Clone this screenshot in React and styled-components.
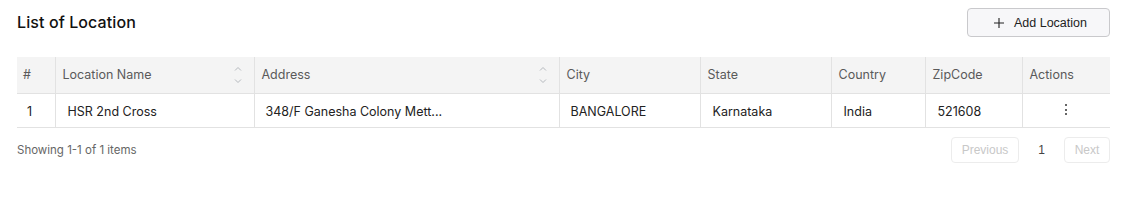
import React from 'react';
import styled, { createGlobalStyle } from 'styled-components';

const GlobalStyle = createGlobalStyle`
  body {
    margin: 0;
    background: #fff;
    font-family: "Inter", "Noto Sans", sans-serif;
    color: #222;
  }
`;

const Page = styled.div`
  padding: 8px 21px 0 17px;
`;

const TopBar = styled.div`
  display: flex;
  justify-content: space-between;
  align-items: center;
  height: 28px;
`;

const Title = styled.h1`
  margin: 0;
  font-size: 16px;
  font-weight: 500;
  color: #111;
  letter-spacing: 0.1px;
`;

const AddButton = styled.button`
  display: flex;
  align-items: center;
  justify-content: center;
  gap: 10px;
  width: 143px;
  height: 29px;
  margin-top: 1px;
  border: 1px solid #c9c9cc;
  border-radius: 4px;
  background: #f7f7f9;
  font-family: "Liberation Sans", Arial, sans-serif;
  font-size: 12.5px;
  color: #222;
  padding: 0 0 0 4px;
`;

const Plus = styled.svg`
  width: 10px;
  height: 10px;
`;

const Table = styled.table`
  margin-top: 21px;
  width: 100%;
  border-collapse: collapse;
  table-layout: fixed;
  font-size: 12.5px;
`;

const HeadCell = styled.th`
  position: relative;
  height: 36px;
  padding: 0 0 0 ${p => p.$pad ?? 7}px;
  background: #f4f4f4;
  color: #5a5a5a;
  font-weight: 400;
  text-align: left;
  border-bottom: 1px solid #e2e2e2;
  border-left: ${p => (p.$first ? 'none' : '1px solid #e2e2e2')};
  box-sizing: border-box;
`;

const Cell = styled.td`
  height: 34px;
  padding: 3px 0 0 ${p => p.$pad ?? 12}px;
  color: #222;
  text-align: ${p => (p.$center ? 'center' : 'left')};
  border-bottom: 1px solid #e2e2e2;
  border-left: ${p => (p.$first ? 'none' : '1px solid #e2e2e2')};
  white-space: nowrap;
  overflow: hidden;
  text-overflow: ellipsis;
  box-sizing: border-box;
`;

const SortIcon = styled.span`
  position: absolute;
  right: 12px;
  top: 50%;
  transform: translateY(-50%);
  display: flex;
  flex-direction: column;
  gap: 8px;
`;

const Dots = styled.span`
  display: inline-flex;
  flex-direction: column;
  gap: 2.5px;
  vertical-align: middle;
  margin-top: -6px;
  & > i {
    width: 2px;
    height: 2px;
    border-radius: 50%;
    background: #333;
  }
`;

const Footer = styled.div`
  display: flex;
  justify-content: space-between;
  align-items: center;
  margin-top: 9px;
`;

const Summary = styled.span`
  font-size: 11.5px;
  color: #666;
`;

const Pager = styled.div`
  display: flex;
  align-items: center;
`;

const PageButton = styled.button`
  width: ${p => p.$w}px;
  height: 26px;
  padding: 0;
  border: 1px solid #ececec;
  border-radius: 4px;
  background: #fff;
  color: #c8c8c8;
  font-family: "Liberation Sans", Arial, sans-serif;
  font-size: 12px;
`;

const PageNumber = styled.span`
  width: 45px;
  text-align: center;
  font-family: "Liberation Sans", Arial, sans-serif;
  font-size: 12px;
  color: #444;
`;

const Chevron = ({ up }) => (
  <svg width="8" height="5" viewBox="0 0 8 5">
    <path
      d={up ? 'M1 4.5 L4 1.5 L7 4.5' : 'M1 0.5 L4 3.5 L7 0.5'}
      fill="none"
      stroke="#b4b8bd"
      strokeWidth="1"
    />
  </svg>
);

const columns = [
  { label: '#', width: 38 },
  { label: 'Location Name', width: 199, sort: true },
  { label: 'Address', width: 305, sort: true },
  { label: 'City', width: 141 },
  { label: 'State', width: 131 },
  { label: 'Country', width: 94 },
  { label: 'ZipCode', width: 97 },
  { label: 'Actions', width: 88 },
];

const rows = [
  {
    id: 1,
    name: 'HSR 2nd Cross',
    address: '348/F Ganesha Colony Mett...',
    city: 'BANGALORE',
    state: 'Karnataka',
    country: 'India',
    zip: '521608',
  },
];

const App = () => (
  <Page>
    <GlobalStyle />
    <TopBar>
      <Title>List of Location</Title>
      <AddButton>
        <Plus viewBox="0 0 10 10">
          <path d="M5 0 V10 M0 5 H10" stroke="#222" strokeWidth="1.1" />
        </Plus>
        Add Location
      </AddButton>
    </TopBar>
    <Table>
      <colgroup>
        {columns.map(c => (
          <col key={c.label} style={{ width: c.width }} />
        ))}
      </colgroup>
      <thead>
        <tr>
          {columns.map((c, i) => (
            <HeadCell key={c.label} $first={i === 0} $pad={i === 0 ? 6 : 7}>
              {c.label}
              {c.sort && (
                <SortIcon>
                  <Chevron up />
                  <Chevron />
                </SortIcon>
              )}
            </HeadCell>
          ))}
        </tr>
      </thead>
      <tbody>
        {rows.map(r => (
          <tr key={r.id}>
            <Cell $first $pad={10}>{r.id}</Cell>
            <Cell>{r.name}</Cell>
            <Cell $pad={11}>{r.address}</Cell>
            <Cell $pad={11}>{r.city}</Cell>
            <Cell>{r.state}</Cell>
            <Cell>{r.country}</Cell>
            <Cell>{r.zip}</Cell>
            <Cell $center $pad={0}>
              <Dots><i /><i /><i /></Dots>
            </Cell>
          </tr>
        ))}
      </tbody>
    </Table>
    <Footer>
      <Summary>Showing 1-1 of 1 items</Summary>
      <Pager>
        <PageButton disabled $w={68}>Previous</PageButton>
        <PageNumber>1</PageNumber>
        <PageButton disabled $w={46}>Next</PageButton>
      </Pager>
    </Footer>
  </Page>
);

export default App;
